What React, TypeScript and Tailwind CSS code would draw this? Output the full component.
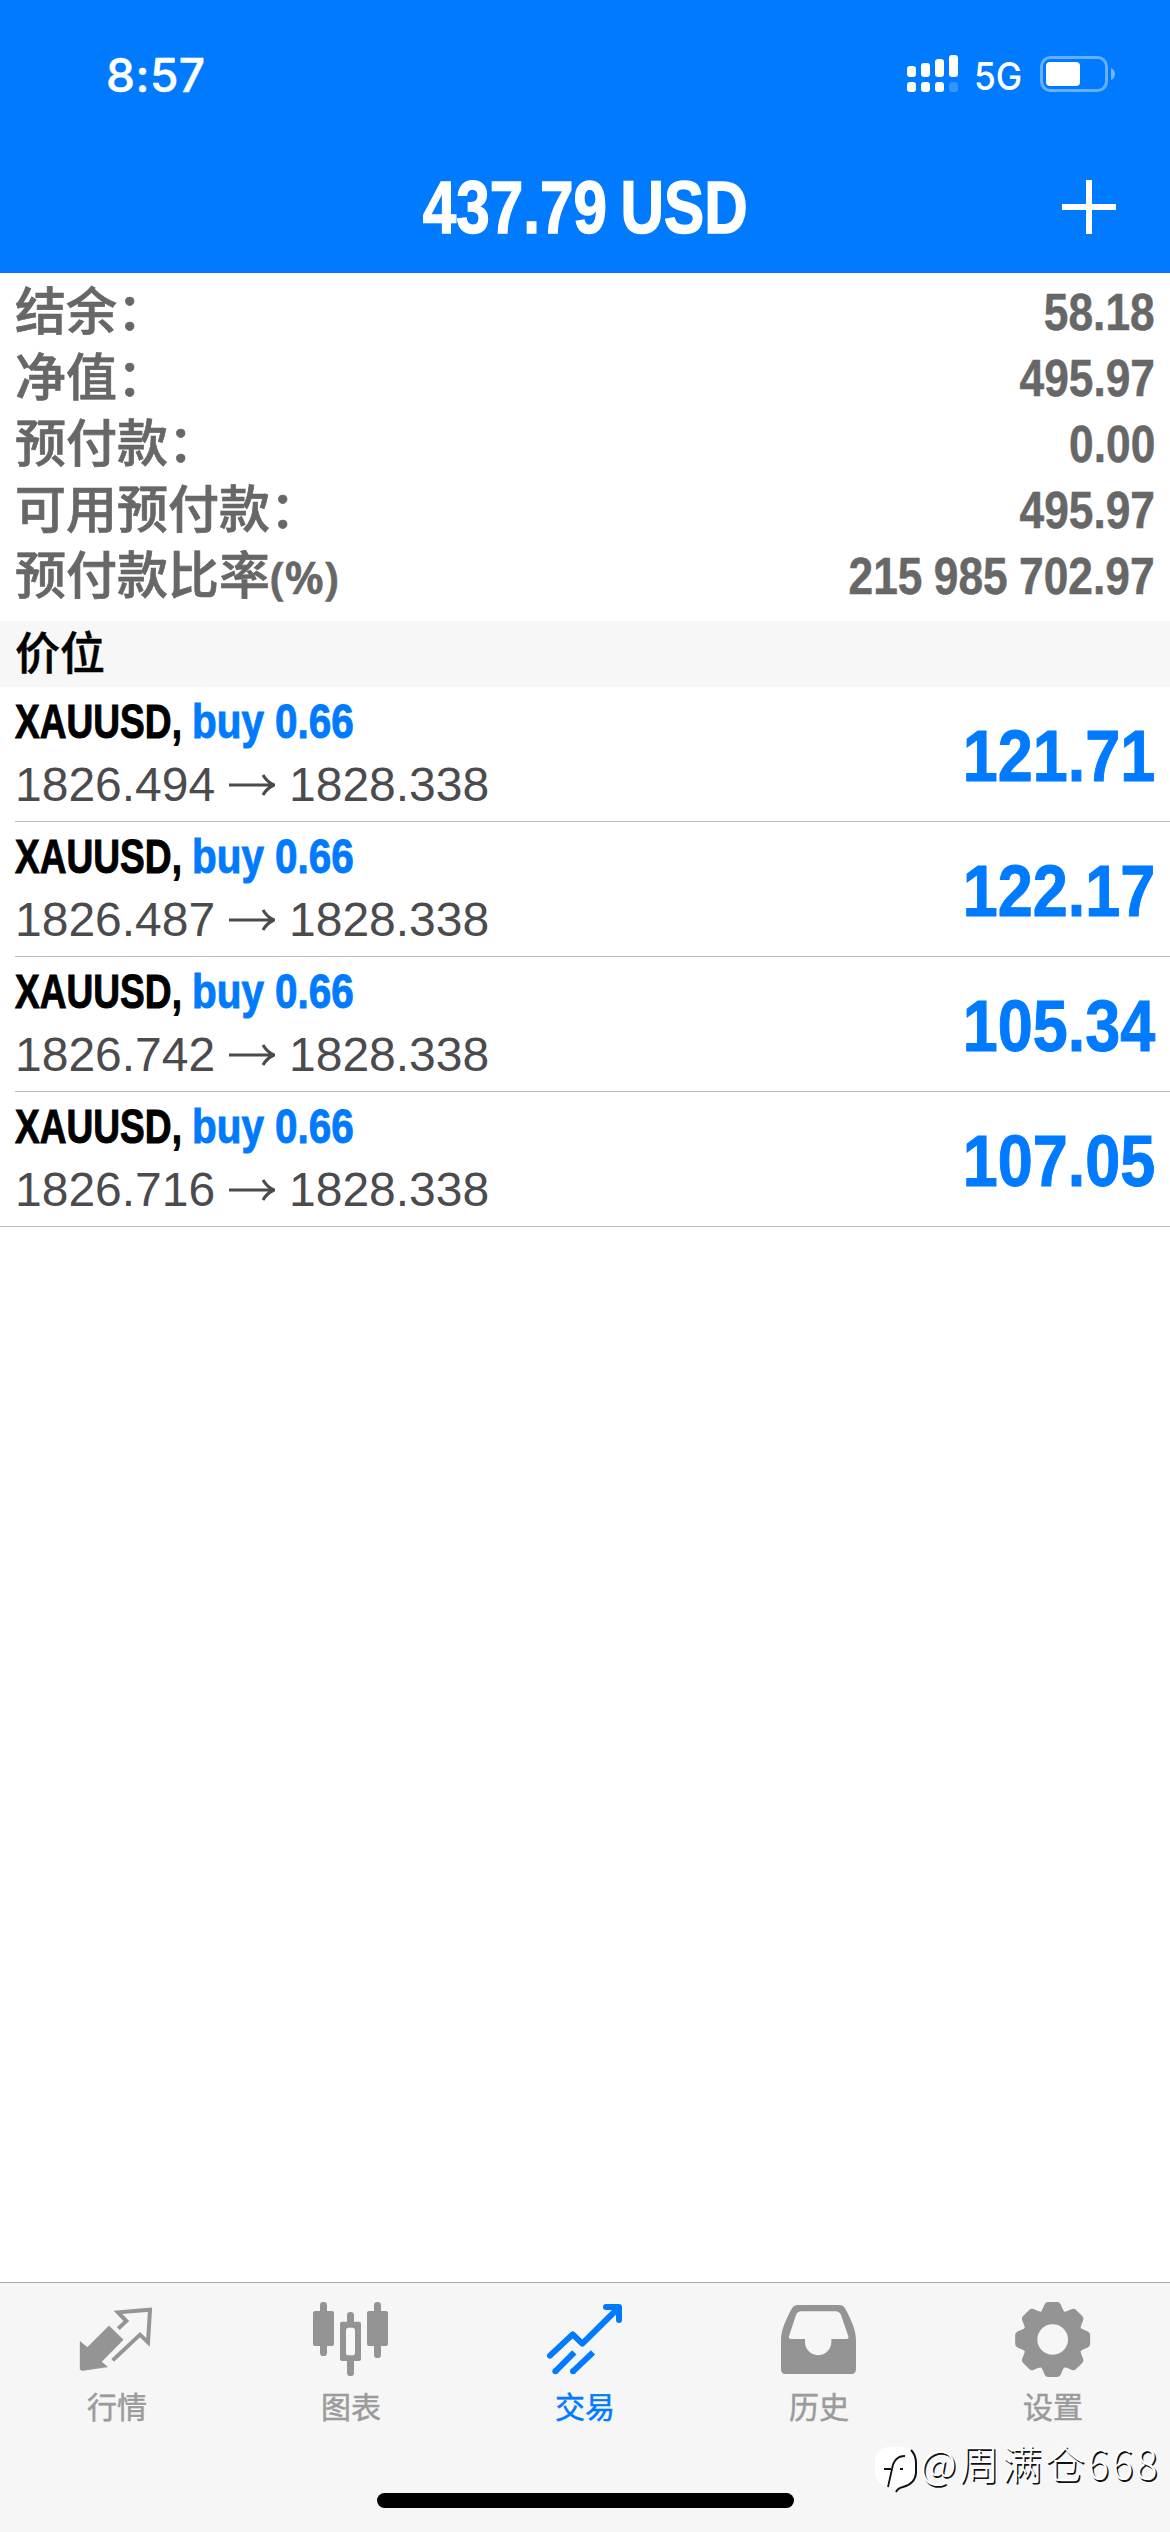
// src/pages/Trade/TradePage.tsx
import React from 'react';
import clsx from 'clsx';

type Position = {
  symbol: string;
  side: string;
  volume: string;
  open: string;
  current: string;
  profit: string;
};

const summary = [
  { label: '结余：', value: '58.18' },
  { label: '净值：', value: '495.97' },
  { label: '预付款：', value: '0.00' },
  { label: '可用预付款：', value: '495.97' },
  { label: '预付款比率', unit: '(%)', value: '215 985 702.97' },
];

const positions: Position[] = [
  { symbol: 'XAUUSD', side: 'buy', volume: '0.66', open: '1826.494', current: '1828.338', profit: '121.71' },
  { symbol: 'XAUUSD', side: 'buy', volume: '0.66', open: '1826.487', current: '1828.338', profit: '122.17' },
  { symbol: 'XAUUSD', side: 'buy', volume: '0.66', open: '1826.742', current: '1828.338', profit: '105.34' },
  { symbol: 'XAUUSD', side: 'buy', volume: '0.66', open: '1826.716', current: '1828.338', profit: '107.05' },
];

const QuotesIcon = () => (
  <svg viewBox="0 0 240 240" className="size-20">
    <path
      d="M9 124 L31 142 L96 77 L139 119 L74 185 L92 201 L14 212 L9 208 Z"
      fill="currentColor"
      stroke="currentColor"
      strokeWidth="1"
      strokeLinejoin="round"
    />
    <path
      d="M124 86 L148 63 L123 37 L219 29 L213 127 L189 104 L107 181"
      fill="none"
      stroke="currentColor"
      strokeWidth="12"
    />
  </svg>
);

const ChartIcon = () => (
  <svg viewBox="0 0 240 240" className="size-20" fill="currentColor">
    <rect x="27" y="6" width="21" height="162" rx="10" />
    <rect x="6" y="33" width="63" height="105" rx="6" />
    <rect x="108" y="36" width="21" height="192" rx="10" />
    <rect x="87" y="65" width="63" height="118" rx="6" />
    <rect x="105" y="83" width="27" height="83" rx="8" fill="#f8f8f8" />
    <rect x="189" y="6" width="21" height="168" rx="10" />
    <rect x="168" y="33" width="63" height="105" rx="6" />
  </svg>
);

const TradeIcon = () => (
  <svg viewBox="0 0 240 240" className="size-20" fill="none" stroke="currentColor" strokeWidth="18">
    <path d="M15 167 L83 103 L112 131 L220 24" strokeLinecap="round" strokeLinejoin="round" />
    <path d="M183 21 H222 V60" strokeLinecap="round" strokeLinejoin="round" />
    <path d="M31 214 L88 157 M84 214 L144 157" />
    <circle cx="31" cy="214" r="9" fill="currentColor" stroke="none" />
    <circle cx="84" cy="214" r="9" fill="currentColor" stroke="none" />
  </svg>
);

const HistoryIcon = () => (
  <svg viewBox="0 0 240 240" className="size-20" fill="currentColor">
    <path
      fillRule="evenodd"
      d="M57 15 H181 Q192 15 198 25 C216 58 231 90 231 120 V208 Q231 222 217 222 H20 Q6 222 6 208 V120 C6 90 21 58 39 25 Q45 15 57 15 Z
         M67 34 H170 Q181 34 186 45 L208 109 Q210 117 202 117 H157 V126 A39.500 39.500 0 0 1 78 126 V117 H36 Q28 117 30 109 L51 45 Q56 34 67 34 Z"
    />
  </svg>
);

const SettingsIcon = () => (
  <svg viewBox="0 0 240 240" className="size-20" fill="currentColor">
    {[0, 45, 90, 135, 180, 225, 270, 315].map((deg) => (
      <path
        key={deg}
        transform={`rotate(${deg} 119 118.500)`}
        d="M80 40 Q87 33 90 25 L95 13 Q98 6 106 6 H132 Q140 6 143 13 L148 25 Q151 33 158 40 Z"
      />
    ))}
    <circle cx="119" cy="118.500" r="67" fill="none" stroke="currentColor" strokeWidth="42" />
  </svg>
);

const tabs = [
  { label: '行情', Icon: QuotesIcon },
  { label: '图表', Icon: ChartIcon },
  { label: '交易', Icon: TradeIcon, active: true },
  { label: '历史', Icon: HistoryIcon },
  { label: '设置', Icon: SettingsIcon },
];

const StatusBar = () => (
  <div className="flex h-[148px] items-center justify-between pl-[106px] pr-[54px]">
    <span className="pt-px font-['Inter'] text-[46px] font-medium leading-none tracking-[0.500px] [-webkit-text-stroke:0.500px]">
      8:57
    </span>
    <div className="flex items-center">
      {/* 双卡信号 */}
      <svg viewBox="0 0 51 38" className="h-[38px] w-[51px]" fill="#fff">
        <rect x="0" y="11" width="9" height="11" rx="3" />
        <rect x="14" y="8" width="9" height="14" rx="3" />
        <rect x="28" y="4" width="9" height="18" rx="3" />
        <rect x="42" y="0" width="9" height="22" rx="3" />
        <rect x="0" y="27" width="9" height="10" rx="3" />
        <rect x="14" y="27" width="9" height="10" rx="3" />
        <rect x="28" y="27" width="9" height="10" rx="3" />
        <rect x="42" y="27" width="9" height="10" rx="3" opacity="0.2" />
      </svg>
      <span className="ml-4 mt-1 w-[66px] origin-left scale-x-[0.93] font-['Inter'] text-[38px] font-medium leading-none">
        5G
      </span>
      <svg viewBox="0 0 76 36" className="h-9 w-[76px]">
        <rect x="1.500" y="1.500" width="65" height="33" rx="9" fill="none" stroke="#fff" strokeWidth="3" opacity="0.4" />
        <rect x="6" y="6" width="34" height="24" rx="4" fill="#fff" />
        <path d="M71 12 Q75 14 75 18 Q75 22 71 24 Z" fill="#fff" opacity="0.45" />
      </svg>
    </div>
  </div>
);

const PositionRow = ({ item, last }: { item: Position; last: boolean }) => (
  <div className={clsx(last ? 'pl-0' : 'pl-[15px]')}>
    <div
      className={clsx(
        'flex h-[135px] items-center justify-between border-b border-[#bcbcbe] pr-[15px]',
        last && 'pl-[15px]',
      )}
    >
      <div className="flex flex-col">
        <div className="flex h-[62px] items-center pb-[3px] text-[49px] font-bold leading-none [-webkit-text-stroke:1px]">
          <span className="w-[177px] origin-left scale-x-[0.757] whitespace-nowrap text-black">{item.symbol},</span>
          <span className="origin-left scale-x-[0.825] whitespace-nowrap text-[#007aff]">
            {item.side} {item.volume}
          </span>
        </div>
        <div className="flex h-[62px] items-center text-[48px] leading-none text-[#4b4b4e]">
          <span className="w-[214px]">{item.open}</span>
          <svg viewBox="0 0 46 22" className="h-[22px] w-[46px]" fill="none" stroke="currentColor" strokeWidth="3">
            <path d="M0 11 H44 M34 1 Q38 8 45 11 Q38 14 34 21" />
          </svg>
          <span className="ml-[14px]">{item.current}</span>
        </div>
      </div>
      <span className="origin-right scale-x-[0.862] pt-[3px] text-[73px] font-bold leading-none text-[#007aff] [-webkit-text-stroke:1px]">
        {item.profit}
      </span>
    </div>
  </div>
);

export default function App() {
  return (
    <div className="flex h-[2532px] w-[1170px] flex-col overflow-hidden bg-white font-['Liberation_Sans','Noto_Sans_CJK_SC',sans-serif]">
      <header className="h-[273px] bg-[#007aff] text-white">
        <StatusBar />
        <div className="grid h-[118px] grid-cols-[1fr_auto_1fr] items-center">
          <span />
          <h1 className="scale-x-[0.803] text-[75px] font-bold leading-none [-webkit-text-stroke:1.500px] [word-spacing:-4px]">
            437.79 USD
          </h1>
          <svg viewBox="0 0 54 54" className="mr-[54px] size-[54px] justify-self-end" stroke="#fff" strokeWidth="6">
            <path d="M27 0 V54 M0 27 H54" />
          </svg>
        </div>
      </header>

      {/* 账户信息 */}
      <section className="h-[348px] px-[15px] pt-[6px] text-[51px] text-[#676767]">
        {summary.map((row) => (
          <div key={row.label} className="flex h-[66px] items-center justify-between leading-none">
            <div className="flex items-center font-medium [-webkit-text-stroke:0.700px]">
              <span>{row.label}</span>
              {row.unit && <span className="font-['Noto_Sans',sans-serif] text-[45px] font-semibold">{row.unit}</span>}
            </div>
            <span className="origin-right scale-x-[0.868] font-bold [-webkit-text-stroke:0.500px] [word-spacing:-1px]">
              {row.value}
            </span>
          </div>
        ))}
      </section>

      <div className="flex h-[66px] items-center bg-[#f7f7f7] pl-[15px] text-[45px] font-medium leading-none text-black [-webkit-text-stroke:0.500px]">
        价位
      </div>

      {/* 持仓列表 */}
      <main className="flex-1">
        {positions.map((item, i) => (
          <PositionRow key={item.open} item={item} last={i === positions.length - 1} />
        ))}
      </main>

      <nav className="relative h-[250px] border-t border-[#a9a9a9] bg-[#f6f6f6] pt-[17px] font-['Noto_Sans_CJK_SC',sans-serif]">
        <div className="grid grid-cols-5">
          {tabs.map(({ label, Icon, active }) => (
            <div
              key={label}
              className={clsx('flex flex-col items-center', active ? 'text-[#007aff]' : 'text-[#949494]')}
            >
              <Icon />
              <span
                className={clsx(
                  'mt-2.5 text-[30px] leading-[30px] [-webkit-text-stroke:0.500px]',
                  !active && 'text-[#9b9b9b]',
                )}
              >
                {label}
              </span>
            </div>
          ))}
        </div>

        {/* 水印 */}
        <div className="absolute left-[874px] top-[162px] flex items-start">
          <svg viewBox="0 0 46 50" className="h-[50px] w-[46px]">
            <rect x="1" y="2" width="40" height="40" rx="14" fill="#fff" />
            <path d="M10 24 H17 M14 42 L18 24 Q20 11 31 11 M26 24 H29" fill="none" stroke="#111" strokeWidth="1.800" />
            <path
              d="M37 5 Q42 10 42 18 V28 Q41 39 29 42 Q24 43 22 47"
              fill="none"
              stroke="#111"
              strokeWidth="2"
            />
          </svg>
          <span className="-mt-[3px] whitespace-nowrap text-[40px] font-light leading-none tracking-[2.800px] text-white [text-shadow:1.500px_1.500px_0_#111]">
            @周满仓668
          </span>
        </div>

        <div className="absolute left-[377px] top-[210px] h-[15px] w-[417px] rounded-full bg-black" />
      </nav>
    </div>
  );
}
